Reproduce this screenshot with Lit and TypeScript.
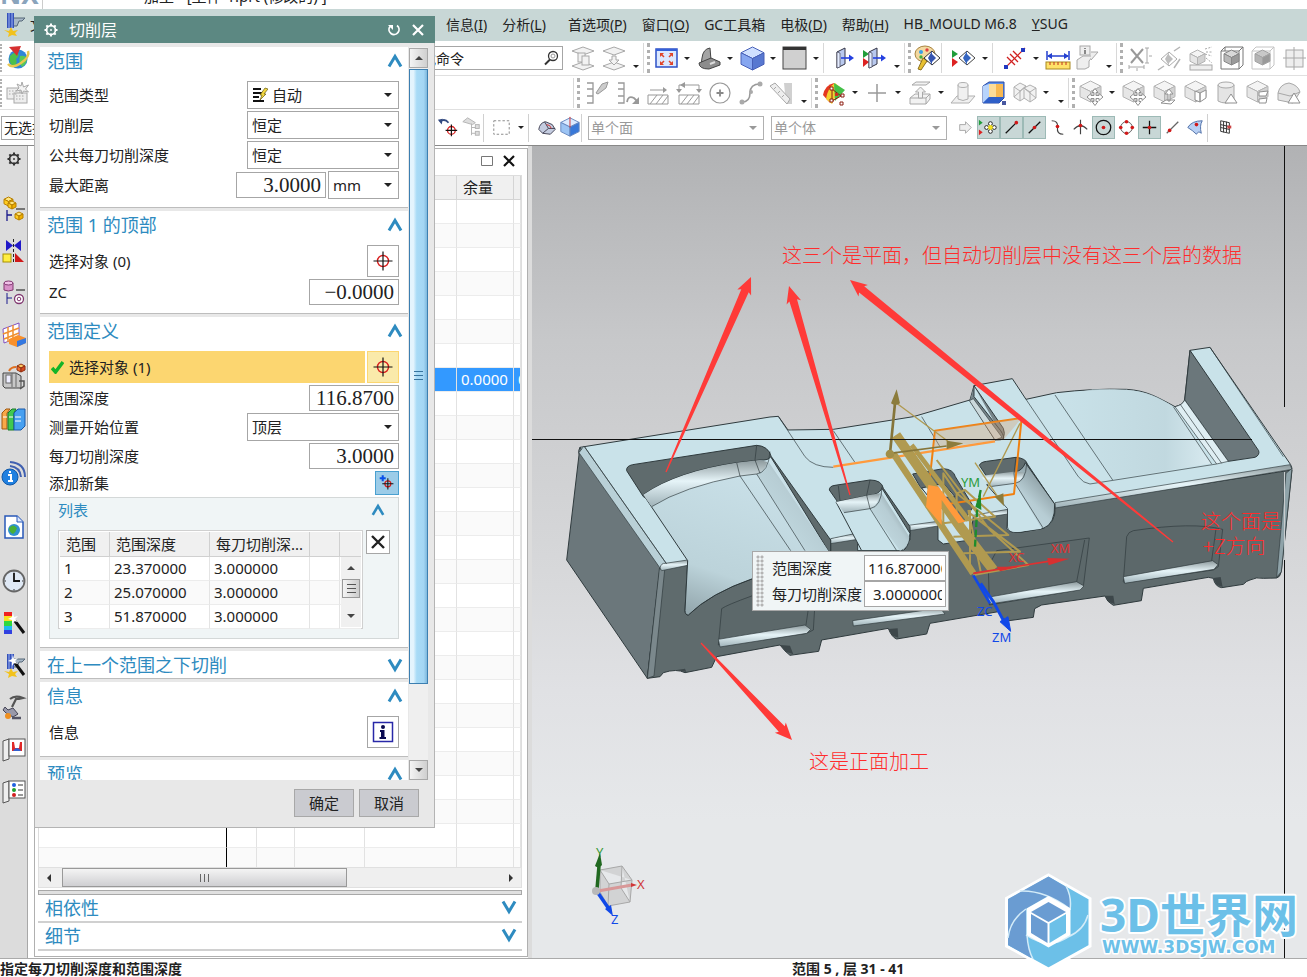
import { LitElement, html, svg, css, nothing } from "lit";
import { customElement, property } from "lit/decorators.js";
import { classMap } from "lit/directives/class-map.js";

/* ---------- icon drawing helpers ---------- */
const G = "#a8a8a8";

const cube = (x: number, y: number, s: number, top: string, left: string, right: string, line: string) => svg`
  <g stroke=${line} stroke-width="1" stroke-linejoin="round">
    <path fill=${top} d="M${x} ${y + s * 0.25}L${x + s * 0.5} ${y}L${x + s} ${y + s * 0.25}L${x + s * 0.5} ${y + s * 0.5}Z"/>
    <path fill=${left} d="M${x} ${y + s * 0.25}V${y + s * 0.75}L${x + s * 0.5} ${y + s}V${y + s * 0.5}Z"/>
    <path fill=${right} d="M${x + s} ${y + s * 0.25}V${y + s * 0.75}L${x + s * 0.5} ${y + s}V${y + s * 0.5}Z"/>
  </g>`;
const grayCube = (x: number, y: number, s: number) => cube(x, y, s, "#f4f4f4", "#e6e6e6", "#d2d2d2", "#b4b4b4");
const eye = (x: number, y: number, a: string, b: string) => svg`
  <path d="M${x - 8} ${y}L${x} ${y - 7}L${x + 8} ${y}L${x} ${y + 7}Z" fill="#fff" stroke=${a}/>
  <path d="M${x} ${y - 7}V${y + 7}L${x - 4} ${y}Z" fill=${b}/><path d="M${x} ${y - 4}L${x + 4} ${y}L${x} ${y + 4}Z" fill=${b}/>`;
const flags = svg`<path d="M2 6L8 10L2 14Z" fill="#1f9d3a"/><path d="M2 14L8 18L2 23Z" fill="#d22"/>`;
const door = (x: number) => svg`<path d="M${x} 8L${x + 8} 4V20L${x} 24Z" fill="#b9c9ee" stroke="#334"/><path d="M${x} 8l3 1v14l-3 1z" fill="#e4ecff" stroke="#334" stroke-width=".6"/>
  <path d="M${x + 4} 14H${x + 14}" stroke="#2440e0" stroke-width="1.6"/><path d="M${x + 12} 10.500l5 3.500l-5 3.500z" fill="#2440e0"/>`;
const move = svg`<path d="M17 11l3 4h-2v3h3v-2l4 3.500l-4 3.500v-2h-3v3h2l-3 4l-3-4h2v-3h-3v2l-4-3.500l4-3.500v2h3v-3h-2z" transform="translate(1 -1.500)" fill="#fff" stroke="#909090"/>`;
const target = (x: number, y: number, r: number, l: number) => svg`
  <circle cx=${x} cy=${y} r=${r} fill="none" stroke="#d81e1e" stroke-width="1.400"/>
  <path d="M${x - l} ${y}H${x + l}M${x} ${y - l}V${y + l}" stroke="#111" stroke-width="1.200"/>`;
const dot = (x: number, y: number) => svg`<circle cx=${x} cy=${y} r="1.900" fill="#d01818"/>`;
const gear = (c: string, bg: string) => svg`<circle cx="14" cy="14" r="4.800" fill="none" stroke=${c} stroke-width="1.800"/>
  <path d="M14 7v3M14 18v3M7 14h3M18 14h3M9 9l2 2M17 17l2 2M19 9l-2 2M11 17l-2 2" stroke=${c} stroke-width="2.200"/><circle cx="14" cy="14" r="3" fill=${bg}/><circle cx="14" cy="14" r="1" fill=${c}/>`;
const cutter = svg`<rect x="7" y="3" width="7" height="15" fill="#3450b8"/><path d="M9 3v15M12 3v15" stroke="#9db4f4"/><path d="M14 8h11l-3 3h-3l-2 5h-3" fill="#a8b8c8" stroke="#567"/><path d="M4 20l5 1l2-4l2 4l5-1l-3 3l2 3l-5-1l-4 2l1-4z" fill="#f2c21c"/>`;
const wand = svg`<path d="M15 12L24 24" stroke="#111" stroke-width="3"/><path d="M13 4l1 4l4-1l-3 3l3 3l-4-1l-2 3v-4l-4-1l4-2z" fill="#fff"/>`;

const icons: Record<string, unknown> = {
  gearDark: gear("#333", "#dcdcdc"),
  gearLight: gear("#fff", "#5c8882"),
  cutter,
  globe: svg`<circle cx="14" cy="15" r="9.500" fill="#2f86d8"/><path d="M6 12q4-5 8-3q2 3-2 6q2 4-2 8q-6-4-4-11z" fill="#4cc04c"/><path d="M16 12q5-1 7 2q0 6-5 9q-4-5-2-11z" fill="#58c858"/><path d="M4 20q4 5 13-1q9-6 7-12" fill="none" stroke="#e8c850" stroke-width="2.500"/><path d="M5 3l12-1l-4 10z" fill="#d63030"/>`,
  sheets: svg`<g fill="#eee" stroke=${G}><rect x="3" y="9" width="13" height="11"/><rect x="10" y="14" width="13" height="10"/></g><path d="M5 12h9M5 15h9M12 17h9M12 20h9" stroke=${G} stroke-dasharray="1.500 1.500"/><path d="M18 3l1.500 5l5-2l-3 4l3 3l-5-1l-1.500 3l-1-4l-5 1l3-3l-2-4l4 2z" fill="#f4f4f4" stroke=${G}/>`,
  layerA: svg`<g fill="#f2f2f2" stroke=${G}><path d="M3 7L14 3L25 7L14 11Z"/><path d="M3 22L14 18L25 22L14 26Z"/><rect x="9" y="9" width="7" height="9"/><rect x="13" y="12" width="7" height="9"/></g>`,
  layerB: svg`<g fill="#f2f2f2" stroke=${G}><path d="M3 7L14 3L25 7L14 11Z"/><path d="M3 22L14 18L25 22L14 26Z"/><path d="M12 12h4v4h3l-5 5l-5-5h3z"/></g>`,
  fit: svg`<rect x="4" y="5" width="21" height="18" fill="#dbe8ff" stroke="#2c50c8" stroke-width="1.500"/><path d="M4 5h21v2H4z" fill="#3560d8"/><path d="M8 9h4l-4 4zM21 9h-4l4 4zM8 21h4l-4-4zM21 21h-4l4-4z" fill="#e0442a"/><path d="M9 10l3 3M20 10l-3 3M9 20l3-3M20 20l-3-3" stroke="#e0442a" stroke-width="1.500"/>`,
  section: svg`<path d="M7 14Q8 5 15 4L16 16L6 21Z" fill="#a4a4a4" stroke="#444"/><path d="M4 19L16 14L25 18V21L14 25Q4 25 4 19Z" fill="#8c8c8c" stroke="#444"/><path d="M15 20l5-2" stroke="#ddd" stroke-width="2"/>`,
  blueCube: cube(3, 3, 23, "#cfe0ff", "#86a6f0", "#5878d0", "#4860b8"),
  grayBox: svg`<rect x="2" y="3" width="23" height="22" fill="#d0d0d0" stroke="#444"/><path d="M2 3h23v3H2z" fill="#333"/>`,
  doorOut: door(5),
  doorFlags: svg`${flags}${door(8)}`,
  palette: svg`<ellipse cx="12" cy="10" rx="10" ry="8" fill="#f3d9a0" stroke="#a88440"/><circle cx="8" cy="8" r="2" fill="#38a0e8"/><circle cx="14" cy="6" r="1.700" fill="#e04040"/><circle cx="8" cy="13" r="1.700" fill="#40b040"/><path d="M5 25l5-11l4 3l-6 9z" fill="#e8c030" stroke="#8c7020"/>${eye(19, 14, "#333", "#3555b0")}`,
  flagEye: svg`${flags}${eye(17, 14, "#444", "#3565c0")}`,
  measureLine: svg`<path d="M4 24L24 4" stroke="#d02020" stroke-width="1.200"/><path d="M6 13l8 8M9 10l8 8M12 7l8 8" stroke="#d02020" stroke-width="1.300"/><rect x="3" y="21" width="4" height="4" fill="#2238c0"/><rect x="20" y="4" width="4" height="4" fill="#2238c0"/>`,
  ruler: svg`<path d="M3 7v9M25 7v9M4 12h20" stroke="#2440d0" stroke-width="1.500"/><path d="M3 12l5-3v6zM25 12l-5-3v6z" fill="#2440d0"/><rect x="2" y="18" width="24" height="7" fill="#ffe268" stroke="#a88820"/><path d="M6 18v3M10 18v3M14 18v3M18 18v3M22 18v3" stroke="#c03020"/>`,
  infoGray: svg`<g stroke=${G} fill="#eee"><path d="M4 16l6-4h10l-4 5v6l-4 2H4z"/><rect x="7" y="2" width="10" height="9"/><path d="M18 8l7 0l-7 8"/></g><path d="M12 4v1M12 6v4" stroke="#888" stroke-width="2"/>`,
  xDim: svg`<path d="M6 5L18 19M18 5L6 19" stroke="#999" stroke-width="2"/><path d="M22 4v15M4 23h15" stroke=${G}/><path d="M20 4h4M20 19h4M4 21v4M19 21v4M24 12h3M12 24v3" stroke=${G}/>`,
  eyeGray: svg`<g opacity=".55">${eye(13, 15, "#666", "#888")}<path d="M2 26l6-4M24 3l-6 4M18 24l6-9" stroke="#777" stroke-width="1.500"/></g>`,
  rulerCube: svg`${grayCube(3, 6, 15)}<path d="M18 5l7-2M18 10l7 2M19 14l6 5M19 8h7" stroke=${G} stroke-dasharray="2 1.500"/><rect x="3" y="21" width="22" height="5" fill="#eee" stroke=${G}/>`,
  boxCube: svg`<path d="M3 7h18v18H3zM7 3h18v18M3 7l4-4M21 7l4-4M21 25l4-4M7 3v4" fill="none" stroke="#777"/>${cube(6, 6, 15, "#d8d8d8", "#b8b8b8", "#9a9a9a", "#888")}`,
  boxCube2: svg`<path d="M3 7h18v18H3zM7 3h18v18M3 7l4-4M21 7l4-4M21 25l4-4" fill="none" stroke="#c4c4c4"/>${cube(6, 6, 15, "#c8c8c8", "#b4b4b4", "#9a9a9a", "#a4a4a4")}`,
  boxCross: svg`<rect x="6" y="6" width="17" height="17" fill="#eee" stroke=${G}/><path d="M14 3v23M3 14h23" stroke=${G}/>`,
  pathLamp: svg`<path d="M5 4h6v6H5M5 10v0h6v7H5M11 17v7H5" fill="none" stroke="#999" stroke-width="1.300"/><path d="M14 14l6-9l6-2l-2 6l-8 6z" fill="#ccc" stroke="#999"/>`,
  pathTurn: svg`<path d="M5 4h6v6H5M5 10v0h6v7H5M11 17v7H5" fill="none" stroke="#999" stroke-width="1.300"/><path d="M14 23q1-7 7-4l3 3" fill="none" stroke="#999" stroke-width="1.800"/><path d="M26 18v7h-7z" fill="#999"/>`,
  hatch: svg`<path d="M4 16h20v9H4z" fill="#fff" stroke="#999"/><path d="M6 25l7-9M12 25l7-9M18 25l6-8" stroke="#999"/><path d="M6 11h15" stroke="#999"/><path d="M19 8l4 3l-4 3z" fill="#999"/>`,
  hatchBox: svg`<path d="M4 16h20v9H4z" fill="#fff" stroke="#999"/><path d="M6 25l7-9M12 25l7-9M18 25l6-8" stroke="#999"/><path d="M4 13V6h20v7" fill="none" stroke="#999"/><path d="M10 3l-5 3l5 3zM1 10h6l-3 4zM21 10h6l-3 4z" fill="#999"/>`,
  circlePlus: svg`<circle cx="14" cy="14" r="10" fill="none" stroke="#999" stroke-width="1.200"/><path d="M14 10.500v7M10.500 14h7" stroke="#888" stroke-width="1.800"/>`,
  curve: svg`<path d="M5 23q8 0 8-9t10-9" fill="none" stroke="#999" stroke-width="1.600"/><circle cx="5" cy="23" r="2.500" fill="#aaa"/><circle cx="23" cy="5" r="2.500" fill="#aaa"/><circle cx="14" cy="13" r="2" fill="#aaa"/>`,
  slope: svg`<path d="M16 4h8v21h-6z" fill="#d0d0d0"/><path d="M2 7l5-3l15 16l-3 5z" fill="#eee" stroke=${G}/><path d="M6 10l2-2M10 14l2-2M14 18l2-2" stroke=${G}/>`,
  rainbow: svg`<path d="M3 16Q5 6 14 4L10 24Z" fill="#e43820"/><path d="M6 20Q8 8 15 4L20 8L12 25Z" fill="#f4d030"/><path d="M14 4L25 11L15 22Z" fill="#44c048"/><path d="M12 10l9 7l-9 5M12 10v12" fill="none" stroke="#8c1c10"/><path d="M10 8h3v3h-3zM10 20h3v3h-3zM21 15h3v3h-3zM20 23h3v3h-3z" fill="#fff" stroke="#8c1c10"/><path d="M15 14h3v3h-3z" fill="#d03020"/>`,
  plus: svg`<path d="M14 5v18M5 14h18" stroke="#999" stroke-width="1.500"/>`,
  extrude: svg`<g fill="#f2f2f2" stroke=${G}><path d="M6 6h14l4-3h-14z"/><path d="M4 19l5-4h15v5l-4 5H4z"/><path d="M4 19h16l4-4M20 19v6" fill="none"/><path d="M12.500 19v-6h-3l5-5l5 5h-3v6z"/></g>`,
  cylSheet: svg`<g fill="#f0f0f0" stroke="#b0b0b0"><path d="M2 24l6-7h18l-6 7z"/><path d="M9 6v14q5 3 10 0V6"/><ellipse cx="14" cy="6" rx="5" ry="2.500"/></g>`,
  colorBox: svg`<path d="M3 7l6-4h15v16l-5 5H3z" fill="#5c90ec" stroke="#2848a0"/><path d="M9 5h14v13H9z" fill="#f8b850"/><path d="M9 5h7v13H9z" fill="#fcdc98"/><path d="M3 7l6-2v13l-6 6z" fill="#b8d4fc"/><path d="M3 24l6-6h15l-5 6z" fill="#2f5fc8"/><rect x="22" y="22" width="4" height="4" fill="#4858a0"/>`,
  wireCubes: svg`<g fill="#f2f2f2" stroke="#b0b0b0"><path d="M3 8l6-4l6 3v11l-6 4l-6-4z"/><path d="M13 9l6-3l6 3v10l-6 4l-6-4z"/><path d="M3 8l6 4v10M15 7l-6 5M13 9l6 4v10M25 9l-6 4M3 18l12-11M25 19l-12-10"/></g>`,
  cubeMove: svg`${grayCube(3, 2, 21)}${move}`,
  cubeUp: svg`${grayCube(3, 2, 21)}<path d="M10 24l5-3h9l-4 4zM17 22v-7h-3l4-5l4 5h-3v7z" fill="#fff" stroke="#909090"/>`,
  cubeFace: svg`${grayCube(3, 2, 21)}<path d="M13 12l5 2v9l-5-2zM18 14l6-3v8l-6 4z" fill="#fff" stroke="#909090"/>`,
  cylCone: svg`<path d="M5 6v16q7 4 16 0V6" fill="#e4e4e4" stroke=${G}/><ellipse cx="13" cy="6" rx="8" ry="3" fill="#f0f0f0" stroke=${G}/><path d="M18 15l6 9H12z" fill="#fff" stroke="#909090"/>`,
  cubeTear: svg`${grayCube(3, 2, 21)}<path d="M15 13l9-1l-2 5h-7zM15 20l8-1l-1 5h-7z" fill="#fff" stroke="#909090"/>`,
  roundCone: svg`<path d="M3 14q2-9 11-10q9 2 11 9l-7 11l-15-3z" fill="#e4e4e4" stroke=${G}/><path d="M3 14l12 3l10-4" fill="none" stroke=${G}/><path d="M19 14l6 10H13z" fill="#fff" stroke="#909090"/>`,
  snapUndo: svg`<path d="M5 8q5-4 9 1" fill="none" stroke="#334a80" stroke-width="1.800"/><path d="M3 6l5-1l-1 6z" fill="#334a80"/>${target(17, 17, 4, 6)}`,
  tools: svg`<g stroke="#b4b4b4" fill="#ddd"><path d="M5 8l5-4l8 5l-3 2z"/><path d="M14 10v12M14 14h5M14 20h5"/><rect x="18" y="11" width="4" height="4"/><rect x="18" y="18" width="4" height="4"/></g>`,
  marquee: svg`<rect x="6" y="7" width="16" height="14" fill="none" stroke="#888" stroke-dasharray="2.500 2"/>`,
  shell: svg`<path d="M6 16q1-7 7-8l7 3l3 5l-5 5l-8-1z" fill="#c4cce0" stroke="#445"/><path d="M12 8l4 7l-6 5M16 15l7 0" fill="none" stroke="#445"/><path d="M14 11q4 0 5 4" stroke="#d03030" fill="none"/>`,
  cubeBlue: svg`${cube(5, 4, 19, "#dbeaff", "#9cc4f4", "#3878d8", "#6888c0")}<path d="M14.500 3v11" stroke="#d03030"/>`,
  arrowGray: svg`<path d="M8 11h6V8l6 6l-6 6v-3H8z" fill="#eee" stroke="#aaa"/>`,
  snapAll: svg`<path d="M4 6l4 3l-4 3z" fill="#1f9d3a"/><path d="M4 16l4 3l-4 3z" fill="#d22"/><g fill="#fff" stroke="#222"><circle cx="12" cy="14" r="2"/><circle cx="20" cy="14" r="2"/><circle cx="16" cy="10" r="2"/><circle cx="16" cy="18" r="2"/></g><circle cx="16" cy="14" r="2.500" fill="#f4e020"/>`,
  snapEnd: svg`<path d="M8 20L19 9" stroke="#111" stroke-width="1.300"/>${dot(19, 9)}`,
  snapMid: svg`<path d="M8 20L20 8" stroke="#111" stroke-width="1.300"/>${dot(14, 14)}`,
  snapPole: svg`<path d="M8 7q7 0 6 7t6 7" fill="none" stroke="#444" stroke-width="1.200"/>${dot(14, 13)}`,
  snapCross: svg`<path d="M7 16q7-8 14 0M14 6v15" fill="none" stroke="#444" stroke-width="1.200"/>${dot(14, 12)}`,
  snapCenter: svg`<circle cx="14" cy="14" r="7.500" fill="none" stroke="#111" stroke-width="1.300"/>${dot(14, 14)}`,
  snapQuad: svg`<circle cx="14" cy="14" r="6" fill="none" stroke="#555"/>${dot(14, 8)}${dot(14, 20)}${dot(8, 14)}${dot(20, 14)}`,
  snapPoint: svg`<path d="M14 7v14M7 14h14" stroke="#111" stroke-width="1.300"/>${dot(14, 14)}`,
  snapCurve: svg`<path d="M8 20L20 8" stroke="#666" stroke-width="1.300"/>${dot(11, 17)}`,
  snapFace: svg`<path d="M6 14q4-7 15-7q-3 5-1 13q-3-3-5 1q-4-4-9-7z" fill="#b8d0f4" stroke="#5070a8"/>${dot(15, 11)}`,
  grid: svg`<g stroke="#333" fill="none"><path d="M9 7l9 2v11l-9-2zM9 11l9 2M9 14l9 2M12 8v11M15 8v11"/></g><path d="M16 12h4v3h-4z" fill="#c44"/>`,
  navTree: svg`${cube(4, 2, 9, "#ffe680", "#ffcc20", "#f0b000", "#b88000")}${cube(8, 6, 8, "#ffe680", "#ffcc20", "#f0b000", "#b88000")}<path d="M7 15v11M7 20h5" stroke="#1a1a8c" stroke-width="1.300" fill="none"/><path d="M16 14h9" stroke="#111"/>${cube(15, 17, 8, "#ffe680", "#ffcc20", "#f0b000", "#b88000")}`,
  constraint: svg`<path d="M6 3l7 5.500l-7 5.500zM21 3l-7 5.500l7 5.500z" fill="#2018c8"/><path d="M13.500 2v24" stroke="#222" stroke-dasharray="3 2"/><rect x="3" y="17" width="8" height="8" fill="#ffee40" stroke="#a89000"/><path d="M15 16v9h9z" fill="#d01818"/>`,
  reuse: svg`<path d="M4 4v7q4 2 9 0V4" fill="#d890c8" stroke="#803870"/><ellipse cx="8.500" cy="4" rx="4.500" ry="2" fill="#f0c0e8" stroke="#803870"/><path d="M7 14v11M7 19h5" stroke="#1a1a8c" fill="none"/><path d="M16 11h9" stroke="#111"/><circle cx="19" cy="20" r="4.500" fill="#fff" stroke="#803870" stroke-width="1.300"/><circle cx="19" cy="20" r="1.800" fill="none" stroke="#803870"/>`,
  meshBox: svg`<path d="M3 8L19 2v14L4 22z" fill="#fff" stroke="#8050c0"/><path d="M3 13l16-6M4 18l15-6M8 6v15M13 4v15" stroke="#f09030" stroke-width="1.500"/><path d="M9 18l9-4l8 3v5l-9 4l-8-3z" fill="#f8902c"/><path d="M17 20l9-3v5l-9 4z" fill="#3478e0"/>`,
  machine: svg`<path d="M3 10h13l5 3v12H5l-2-2z" fill="#c8c8c8" stroke="#444"/><rect x="6" y="12" width="5" height="8" fill="#eef" stroke="#666"/><path d="M12 10v14M16 10v14" stroke="#666"/><path d="M9 8q2-4 7-4" fill="none" stroke="#e07020" stroke-width="2"/>${cube(17, 1, 8, "#ffc860", "#f07030", "#d84820", "#903010")}<path d="M19 18h5v5l-4 3" fill="none" stroke="#555" stroke-width="1.500"/>`,
  books: svg`<path d="M2 8l4-4h4l-3 4v16H2z" fill="#f8a848" stroke="#a05810"/><path d="M8 8l4-4h4l-2 4v17H8z" fill="#40c850" stroke="#187828"/><path d="M14 8l4-4h7v17l-4 4h-7z" fill="#48a0f0" stroke="#1858a8"/><path d="M3 12h4M9 12h4M15 12h6M15 16h6" stroke="#fff"/>`,
  internet: svg`<circle cx="10" cy="18" r="8" fill="#2080e0" stroke="#1058a8"/><path d="M10 12v2M8 16h3v6M8 22h5" stroke="#fff" stroke-width="2" fill="none"/><path d="M10 7q10 1 11 11M10 3q15 1 15 15" fill="none" stroke="#4060b0" stroke-width="2"/>`,
  webDoc: svg`<path d="M5 3h12l6 6v16H5z" fill="#fff" stroke="#2858b8" stroke-width="1.500"/><path d="M17 3v6h6" fill="#dbe6ff" stroke="#2858b8"/><circle cx="14" cy="17" r="6" fill="#3090d0"/><path d="M9 15q4-5 8 0q-1 4-4 6q-4-2-4-6z" fill="#48b038"/>`,
  clock: svg`<circle cx="14" cy="14" r="10.500" fill="#dfe8f4" stroke="#666" stroke-width="1.800"/><path d="M14 6v8h6" stroke="#111" stroke-width="1.800" fill="none"/><path d="M14 4.500v1M14 22v1.500M4.500 14h1.500M22 14h1.500" stroke="#333"/>`,
  spectrum: svg`<rect x="4" y="3" width="8" height="4" fill="#f02020"/><rect x="4" y="7" width="8" height="5" fill="#f8e020"/><rect x="4" y="12" width="8" height="5" fill="#30d840"/><rect x="4" y="17" width="8" height="4" fill="#20b8f0"/><rect x="4" y="21" width="8" height="4" fill="#3040e0"/>${wand}`,
  cutWand: svg`${cutter}${wand}`,
  robot: svg`<path d="M10 6q5-4 13-1l-4 1l-3 0l-4 8" fill="none" stroke="#555" stroke-width="2.200"/><path d="M5 14l3 3l5-2l5 6l-5 3l-7-4l-3-3z" fill="#99a" stroke="#445"/><circle cx="8" cy="23" r="3" fill="#f09020"/><path d="M12 25h9" stroke="#556" stroke-width="2.500"/>`,
  bookRed: svg`<path d="M3 6l6-2v20l-6 2z" fill="#eee" stroke="#555"/><rect x="9" y="4" width="16" height="17" fill="#fff" stroke="#555"/><path d="M12 7h10v9H12z" fill="#e02828"/><path d="M14 7h6l-1 6h-4z" fill="#fff"/><path d="M13 16q4-6 8 0z" fill="#3060d0"/>`,
  bookList: svg`<path d="M3 6l6-2v20l-6 2z" fill="#eee" stroke="#555"/><rect x="9" y="4" width="16" height="17" fill="#fff" stroke="#555"/><circle cx="14" cy="8" r="2" fill="#2060e0"/><circle cx="14" cy="13" r="2" fill="#20a030"/><circle cx="14" cy="18" r="2" fill="#d02020"/><path d="M18 8h5M18 13h5M18 18h5" stroke="#333"/>`,
  target: target(14, 14, 5.5, 9.5),
  addTarget: svg`<path d="M9 5v7M5.500 8.500h7" stroke="#0a50e8" stroke-width="2.400"/>${target(15, 15, 3.5, 6.5)}`,
  infoBox: svg`<rect x="4.500" y="4.500" width="19" height="19" fill="#fff" stroke="#2828a8" stroke-width="1.500"/><circle cx="14" cy="9" r="2" fill="#0a0a50"/><path d="M11 12h4.500v7H17v2h-6.500v-2H12v-5h-1z" fill="#0a0a50"/>`,
  cross: svg`<path d="M7 7L21 21M21 7L7 21" stroke="#222" stroke-width="2.800"/>`,
};
const icon = (name: string, size = 28) =>
  html`<svg class="icon" width=${size} height=${size} viewBox="0 0 28 28" aria-hidden="true">${icons[name]}</svg>`;

const sheetIcon = html`<svg class="icon lead" width="16" height="16" viewBox="0 0 16 16" aria-hidden="true">
  <path d="M1 2h8M1 6h9M1 10h6M1 14h11" stroke="#111" stroke-width="2"/><path d="M13 1l3 1l-4 5h2l-6 6l2-5H8z" fill="#f4d840" stroke="#665c10" stroke-width=".7"/></svg>`;
const chevron = (down = false, size = 16) => html`<svg class="icon" width=${size} height=${size} viewBox="0 0 16 16" aria-hidden="true">
  <path d=${down ? "M2 2.500L8 12.500L14 2.500" : "M2 13.500L8 3.500L14 13.500"} fill="none" stroke="#2e8bc0" stroke-width="3"/></svg>`;

/* ---------- shared styles ---------- */
const base = css`
  * { box-sizing: border-box; }
  :host, button, input, select { font-family: "Noto Sans", "Noto Sans CJK SC", sans-serif; color: #222; }
  button { background: none; border: 0; padding: 0; margin: 0; font-size: inherit; line-height: inherit; }
  .icon { display: block; flex: none; }
  .pick { position: relative; display: flex; }
  .pick select { appearance: none; width: 100%; height: 100%; background: #fff; border: 1px solid #a6a6a6; border-radius: 0; padding: 0 18px 0 4px; font-size: 15px; margin: 0; }
  .pick::after { content: ""; position: absolute; right: 7px; top: 50%; margin-top: -2px; border: 4px solid transparent; border-top-color: #222; border-bottom: 0; pointer-events: none; }
`;

/* ---------- toolbars ---------- */
interface Group { wide?: boolean; cells: string }
@customElement("tool-strip")
class ToolStrip extends LitElement {
  @property({ attribute: false }) groups: Group[] = [];
  static styles = [base, css`
    :host { display: flex; align-items: center; }
    .group { display: flex; align-items: center; }
    .wide { gap: 2px; }
    button { width: 29px; height: 30px; display: flex; align-items: center; justify-content: center; }
    .caret { width: 14px; }
    .caret::after, .low::after { content: ""; border: 3px solid transparent; border-top-color: #222; border-bottom: 0; }
    .low { width: 15px; align-items: flex-end; padding-bottom: 5px; }
    .sep { width: 8px; height: 30px; border-left: 1px solid #d8d8d8; }
    .grip { width: 8px; height: 30px; border-left: 1px solid #d8d8d8; padding-left: 3px; }
    .grip::after { content: ""; display: block; height: 100%; border-left: 3px dotted #b0b0b0; }
  `];
  cell(c: string) {
    if (c === "v") return html`<button class="caret" aria-label="更多"></button>`;
    if (c === "_") return html`<button class="low" aria-label="选项"></button>`;
    if (c === "|") return html`<span class="sep"></span>`;
    if (c === ":") return html`<span class="grip"></span>`;
    return html`<button aria-label=${c}>${icon(c)}</button>`;
  }
  render() {
    return this.groups.map((g) => html`<div class=${classMap({ group: true, wide: !!g.wide })}>${g.cells.split(" ").map((c) => this.cell(c))}</div>`);
  }
}

/* ---------- 3D part scene ---------- */
const arrow = (x1: number, y1: number, x2: number, y2: number) => {
  const d = Math.hypot(x2 - x1, y2 - y1);
  const ux = (x2 - x1) / d, uy = (y2 - y1) / d;
  const p = (along: number, side: number) => `${(x1 + ux * along - uy * side).toFixed(1)},${(y1 + uy * along + ux * side).toFixed(1)}`;
  return svg`<polygon fill="#ff3a38" points=${[p(0, -0.6), p(d - 15, -4), p(d - 17, -7.5), p(d, 0), p(d - 17, 7.5), p(d - 15, 4), p(0, 0.6)].join(" ")}/>`;
};

@customElement("part-view")
class PartView extends LitElement {
  static styles = [base, css`
    :host { display: block; position: relative; flex: 1; min-width: 0; background: linear-gradient(#b1b2b4, #c7c8ca 24%, #d8d9db 54%, #e0e1e4 67%, #e6e8ea 83%); }
    .scene { display: block; width: 100%; height: 100%; }
    .note { font-family: "Noto Sans CJK SC", sans-serif; font-weight: 300; font-size: 20px; fill: #ff2c2c; }
    .axis { font-family: "Noto Sans", sans-serif; font-size: 13px; }
    .float { position: absolute; left: 220px; top: 405px; width: 197px; display: grid; grid-template-columns: 14px 90px 82px; column-gap: 2px; row-gap: 0; align-items: center; background: #f0f5f6; border: 1px solid #a8a8a8; padding: 3px 2px 3px 3px; font-size: 15px; line-height: 24px; }
    .handle { grid-row: 1 / 3; align-self: stretch; width: 8px; background: radial-gradient(circle, #b4b4b4 1px, transparent 2px) 0 0 / 4px 4px; }
    .float label { white-space: nowrap; }
    .float input { width: 82px; height: 26px; border: 1px solid #a6a6a6; border-radius: 0; padding: 0 3px; font-size: 15px; margin: 0; }
    .float .second { padding-left: 8px; }
  `];
  render() {
    return html`
      <svg class="scene" viewBox="532 146 775 812" preserveAspectRatio="xMinYMin slice">
        <defs>
          <linearGradient id="roll" x1="0" y1="0" x2="0" y2="1"><stop offset="0" stop-color="#8b989b"/><stop offset=".45" stop-color="#e6f4f8"/><stop offset="1" stop-color="#9fb2b8"/></linearGradient>
          <linearGradient id="roll2" x1="0" y1="1" x2="1" y2="0"><stop offset="0" stop-color="#c9e2e9"/><stop offset=".55" stop-color="#b7cdd4"/><stop offset="1" stop-color="#68767a"/></linearGradient>
          <linearGradient id="floor" x1=".6" y1="0" x2=".2" y2="1"><stop offset="0" stop-color="#cbe2ea"/><stop offset=".7" stop-color="#bcd3da"/><stop offset="1" stop-color="#8fa2a8"/></linearGradient>
          <linearGradient id="dish" x1="0" y1="0" x2="1" y2="0"><stop offset="0" stop-color="#c9e2e9"/><stop offset=".7" stop-color="#bdd4db"/><stop offset="1" stop-color="#dfeef3"/></linearGradient>
        </defs>
        <path d="M532 439.500H1252M1284.500 146V407" stroke="#111" fill="none"/>
        <path d="M1284.500 560V958" stroke="#111"/>
        <g transform="translate(560 340) scale(.33333)" stroke="#2f3a3d" stroke-width="3" stroke-linejoin="round">
          <path fill="#c9e2e9" d="M60 322L630 231L655 229L684 270L820 268L1060 230L1230 180L1242 137L1357 116L1398 178L1490 158Q1600 145 1700 148C1760 152 1790 170 1845 200Q1868 195 1874 180L1890 31L1950 22L2192 374L2196 385L1485 492L1480 560L1340 620L385 830L300 682Z"/>
          <path fill="#6b777b" d="M60 322Q54 330 57 345L20 660L262 1015L300 682Z"/>
          <path fill="#5f6b6d" d="M300 684L383 664L375 812Q376 826 385 825Q450 760 580 715L812 670V598L893 582V632H1030Q1050 620 1050 566L1134 549V600L1150 612L1230 600L1240 530L1343 512L1341 566Q1350 580 1380 577L1450 565Q1486 552 1486 500L2196 390L2164 695Q2160 712 2150 714L2110 715Q2090 710 2070 720Q2060 722 2050 733L1985 743Q1965 740 1960 715L1945 712L1750 745L1744 782L1660 796Q1640 785 1635 768L1445 795L1424 806L1420 832L1340 843Q1328 838 1315 815L1110 850L1100 882L1010 897Q995 892 985 865L785 900L776 934L690 946Q675 935 660 915L470 950L455 982L375 998Q350 985 310 998L300 1010L262 1015L300 684Z"/>
          <path fill="#7b888c" stroke-width="2" d="M298 686L262 1015L282 1008L314 690Z"/>
          <path fill="#b9d0d7" stroke-width="2" d="M72 318L320 672L300 684L57 338Z"/>
          <path fill="url(#roll)" stroke-width="2" d="M300 684Q304 668 316 670L383 660V676L305 692Z"/>
          <path fill="url(#roll)" stroke-width="2" d="M812 596L893 579V598L812 611Z"/>
          <path fill="url(#roll)" stroke-width="2" d="M1046 556L1134 544V558L1050 572Z"/>
          <path fill="url(#roll)" stroke-width="2" d="M1485 488L2190 374L2196 388L1486 504Z"/>
          <path fill="url(#roll)" stroke-width="2" d="M1240 526L1343 508V522L1242 538Z"/>
          <path fill="#8fa3a9" stroke-width="2" d="M2196 385L2164 695L2150 712L2178 400Z"/>

          <path fill="#5f6b6d" d="M200 392Q198 378 218 374L590 316Q625 318 634 350L812 600V634L560 640L250 470Z"/>
          <path fill="url(#floor)" d="M250 464Q350 395 530 368L600 360Q626 362 632 350L806 634L812 670L580 715Q450 760 385 825Q376 826 375 812L383 662Z"/>
          <path stroke="none" fill="url(#roll)" d="M250 464Q350 395 530 368L600 360L622 366Q612 398 590 402L540 408Q370 440 275 500Z"/>
          <path stroke="none" fill="url(#roll2)" d="M590 402Q618 396 626 366L806 634H740Z"/>
          <path fill="none" stroke-width="2" d="M275 500Q370 440 540 408L590 402Q625 398 630 335M530 368L540 408L692 632M590 402L735 632M590 316L585 360L600 400"/>
          <path fill="none" stroke-width="2" d="M655 229L735 350Q760 382 820 382M820 272L884 366M72 318L320 672"/>

          <path fill="#5f6b6d" d="M808 450Q808 438 825 436L930 420Q965 420 970 445L1050 560V600L1000 600L850 510Z"/>
          <path fill="#c9e2e9" d="M828 486L925 466Q955 466 966 445L1050 580Q1048 625 1020 632H905Z"/>
          <path stroke="none" fill="url(#roll)" d="M828 486L925 466L960 460Q955 502 930 506L852 518Z"/>
          <path stroke="none" fill="url(#roll2)" d="M930 506Q955 496 962 456L1048 590Q1046 622 1020 632Z"/>
          <path fill="none" stroke-width="2" d="M852 518L930 506Q965 500 966 440M835 438L840 482M930 420L920 466L930 506L1010 632"/>

          <path fill="#5f6b6d" d="M1058 402L1150 386Q1180 388 1186 410L1240 500L1200 560L1080 440Z"/>
          <path fill="url(#roll)" d="M1085 444L1150 430L1185 470L1110 476Z"/>
          <path fill="#5f6b6d" d="M1258 376Q1262 366 1280 364L1368 352Q1398 355 1402 372L1482 490L1440 520L1300 440Z"/>
          <path fill="url(#roll2)" d="M1280 434L1365 396Q1388 392 1396 368L1484 492Q1486 552 1450 565L1380 577Q1345 580 1343 560V506Z"/>
          <path stroke="none" fill="#c9e2e9" d="M1290 440L1365 430L1445 566L1380 575Q1345 580 1344 560V506Z"/>
          <path stroke="none" fill="url(#roll)" d="M1262 408L1370 394L1392 398Q1385 425 1365 430L1290 440Z"/>
          <path fill="none" stroke-width="2" d="M1290 440L1365 430Q1398 425 1400 370M1368 352L1362 400L1365 430L1450 565"/>

          <path fill="#768489" d="M1242 137V170L1322 272Q1334 290 1330 297Q1325 300 1305 300L1230 182M1242 137L1330 265Q1336 280 1330 295"/>
          <path fill="#cbd9dc" stroke-width="2" d="M1228 182L1240 176L1326 292L1305 300Z"/>
          <path fill="#6b777b" d="M1890 31L1874 180L2005 364L2085 352Q2100 345 2096 332Z"/>
          <path fill="url(#dish)" opacity=".7" stroke="none" d="M1600 148C1760 142 1790 170 1842 200L1955 370L1660 418L1490 168Z"/>
          <path fill="#dfeef3" stroke-width="2" d="M1845 200Q1868 195 1874 180L2005 364L1970 372Z"/>
          <path fill="none" stroke-width="2" d="M1398 178L1555 410Q1570 430 1590 432L1970 372M1485 165L1658 420M1840 200L1955 372M1862 195L1985 370M1085 230L1140 320M1950 22L2170 350"/>

          <path fill="#5c686a" stroke-width="2" d="M485 806Q500 795 575 768L768 740L760 870L740 880L475 915Z"/>
          <path fill="url(#roll)" stroke-width="2" d="M475 898L735 855L752 868L740 880L480 921Z"/>
          <path fill="url(#roll)" stroke-width="2" d="M878 842L1140 804L1155 822L880 858Z"/>
          <path fill="#5c686a" stroke-width="2" d="M1285 680L1310 632L1588 594L1570 740L1555 750L1288 795Z"/>
          <path fill="url(#roll)" stroke-width="2" d="M1283 772L1550 725L1572 738L1560 750L1290 792Z"/>
          <path fill="none" stroke-width="2" d="M1574 600L1550 725M746 800L738 855"/>
          <path fill="#5c686a" stroke-width="2" d="M1690 725L1700 590Q1705 575 1720 572Q1900 545 1988 568L1975 680L1960 690L1692 728Z"/>
          <path fill="url(#roll)" stroke-width="2" d="M1690 710L1958 662L1974 674L1962 688L1694 730Z"/>
          <path fill="none" stroke-width="2" d="M1968 566L1955 662"/>
          <path fill="#3d474a" stroke="none" d="M660 915l30 2l10 26l-22-8zM985 867l28 -2l2 28l-18-6zM1635 767l25 0l4 26l-18-8zM1960 714l22 -3l6 30l-18-6zM350 990l25-4l4 10z"/>

          <path d="M820 380L1305 304" stroke="#ff9a3c" stroke-width="7" fill="none"/>
          <path d="M1125 272L1385 234L1362 462L1100 502Z" fill="none" stroke="#f08010" stroke-width="6"/>
          <path d="M1125 272L1385 234L1330 300L1120 325Z" fill="#d8a070" fill-opacity=".35" stroke="none"/>
          <g stroke="#b09a50" fill="none" stroke-width="9">
            <path d="M1000 340L1240 700" stroke-width="20"/><path d="M1008 285L1200 560L1300 690" stroke-width="30"/><path d="M1055 315L1225 540" stroke-width="14"/>
            <path d="M1240 705L1405 675L1290 570L1130 360M1210 640L1380 635L1230 520M1180 590L1345 585L1190 460L1150 400V560M1150 550L1305 530L1215 450L1190 460V550M1230 700V510M1262 695L1225 510" stroke-width="6"/>
            <path d="M1010 190L1175 312M1245 368L1320 480M1380 250L1270 470" stroke-width="4"/>
          </g>
          <path d="M1105 435L1135 440L1215 545L1195 550L1145 480V555L1098 500Z" fill="#ff9a3c" stroke="none"/>
          <path d="M990 340L1005 190" stroke="#85753a" stroke-width="8"/><path d="M990 340L1160 318" stroke="#85753a" stroke-width="5"/>
          <path d="M1010 148L993 190Q1006 200 1020 190ZM1210 310L1160 302V328ZM1332 498L1304 470L1330 460Z" fill="#8c7c3c" stroke="none"/>
          <circle cx="990" cy="342" r="13" fill="#a08e48" stroke="none"/>
          <path d="M1262 450L1252 500L1245 620" stroke="#1e8c2c" stroke-width="7" stroke-dasharray="22 8" fill="none"/><path d="M1262 450L1246 500L1264 510Z" fill="#1e8c2c" stroke="none"/>
          <path d="M1240 700L1465 664" stroke="#e03030" stroke-width="5"/><path d="M1528 656L1462 654L1466 676ZM1380 680L1310 680L1320 694Z" fill="#d83030" stroke="none"/>
          <path d="M1240 706L1290 790" stroke="#1048e8" stroke-width="8"/><path d="M1262 730L1300 785L1332 845" stroke="#1048e8" stroke-width="9" fill="none"/><path d="M1352 874L1320 845L1344 830Z" fill="#1048e8" stroke="#1048e8"/>
        </g>
        <path d="M1284.500 472V560" stroke="#c8ccce"/>
        <path d="M532 439.500H1252" stroke="#111" stroke-width="1"/>
        <g class="axis">
          <text x="961" y="487" fill="#2c9c3c">YM</text><text x="1051" y="553" fill="#e03030">XM</text><text x="1009" y="562" fill="#e03030">XC</text>
          <text x="977" y="616" fill="#1048e8">ZC</text><text x="992" y="642" fill="#1048e8">ZM</text>
          <text x="596" y="857" fill="#3a9a3a">Y</text><text x="637" y="889" fill="#d03838">X</text><text x="611" y="924" fill="#1048e8">Z</text>
        </g>
        <path d="M600 870L622 866L632 880L630 902L608 906L600 892ZM600 870L609 884L632 880M609 884L608 906M622 866L621 888L630 902" fill="#c4c4c4" fill-opacity=".6" stroke="#a8a8a8"/>
        <path d="M598 891L632 885" stroke="#d89898" stroke-width="3"/><path d="M637 885l-6-2v4z" fill="#d03838"/>
        <path d="M597 889L599 866" stroke="#206820" stroke-width="3.500"/><path d="M600 853L595 866Q599 869 602 865Z" fill="#206820"/>
        <path d="M598 893L609 909" stroke="#1048e8" stroke-width="3.500"/><path d="M613 916L605 909L611 905Z" fill="#1048e8"/>
        <circle cx="596" cy="891" r="4" fill="#b8b8b8"/>
        ${arrow(666, 472, 751, 277)}${arrow(850, 495, 789, 286)}${arrow(1173, 542, 850, 280)}${arrow(701, 643, 792, 740)}
        <g class="note">
          <text x="782" y="263">这三个是平面，但自动切削层中没有这三个层的数据</text>
          <text x="1201" y="529">这个面是</text><text x="1203" y="554">+Z方向</text>
          <text x="809" y="769">这是正面加工</text>
        </g>
      </svg>
      <form class="float">
        <span class="handle"></span>
        <label for="fd">范围深度</label><input id="fd" value="116.870000">
        <label for="fc">每刀切削深度</label><input id="fc" class="second" value="3.0000000">
      </form>`;
  }
}

/* ---------- cut levels dialog ---------- */
@customElement("cut-dialog")
class CutDialog extends LitElement {
  static styles = [base, css`
    :host { display: flex; flex-direction: column; background: #e8e8e8; border: 1px solid #b4b4b4; border-top: 0; font-size: 15px; line-height: 24px; }
    .title { display: flex; align-items: center; height: 27px; flex: none; background: #5c8882; color: #fff; margin: 0 -1px; padding: 0 5px 0 4px; }
    .title h2 { flex: 1; margin: 0 0 0 5px; font-size: 16px; font-weight: 400; }
    .title button { width: 24px; display: flex; justify-content: center; }
    .main { flex: 1; min-height: 0; display: flex; padding: 4px 6px 0 5px; gap: 1px; }
    .list { flex: 1; min-width: 0; overflow: hidden; }
    section { background: #fff; border-bottom: 1px solid #bdbdbd; margin-bottom: 3px; padding-bottom: 8px; }
    section.closed { padding-bottom: 0; }
    .head { width: 100%; height: 34px; display: flex; align-items: flex-start; justify-content: space-between; padding: 1px 5px 0 7px; font-size: 18px; line-height: 27px; color: #2e8bc0; }
    .closed .head { height: 27px; }
    .head .icon { margin-top: 5px; }
    .rows { display: flex; flex-direction: column; gap: 2px; padding: 0 9px; }
    .row { display: flex; align-items: center; justify-content: space-between; gap: 2px; }
    .row label, .row .name { flex: 1; }
    .pick { width: 152px; height: 28px; }
    .unit { width: 71px; }
    .lead { position: absolute; left: 5px; top: 6px; }
    .withicon select { padding-left: 24px; }
    .num { width: 90px; height: 26px; border: 1px solid #a6a6a6; border-radius: 0; text-align: right; font-family: "Liberation Serif", serif; font-size: 21px; padding: 0 4px; margin: 0; background: #fff; }
    .sq { width: 32px; height: 32px; border: 1px solid #a6a6a6; background: #fff; display: flex; align-items: center; justify-content: center; }
    .small { width: 24px; height: 24px; }
    .active { height: 32px; }
    .active .name { background: #fcd670; height: 32px; display: flex; align-items: center; gap: 5px; padding-left: 2px; }
    .active .sq { background: #faeaaa; border-color: #fcd670; }
    .add { background: #9ccce8; border-color: #4aa0d0; }
    .box { height: 142px; background: #f0f5f6; border: 1px solid #d4d8d8; padding: 0 8px; }
    .sub { width: 100%; display: flex; justify-content: space-between; align-items: center; height: 25px; color: #2e8bc0; padding: 0 5px 2px 0; }
    .area { display: flex; align-items: flex-start; gap: 3px; margin-top: 7px; }
    .tbl { position: relative; width: 305px; height: 99px; border: 1px solid #d0d0d0; background: #fff; padding: 1px; }
    table { border-collapse: separate; border-spacing: 0; table-layout: fixed; width: 301px; }
    th, td { height: 24px; padding: 0 0 0 4px; text-align: left; font-weight: 400; border-right: 1px solid #e4e4e4; border-bottom: 1px solid #ececec; line-height: 23px; white-space: nowrap; overflow: hidden; }
    th { background: #f0f0f0; height: 25px; padding-left: 6px; border-color: #d0d0d0; }
    th:last-child, td:last-child { border-right: 0; }
    tr:nth-child(even) td { background: #fafafa; }
    .mini { position: absolute; right: 1px; top: 26px; bottom: 1px; width: 20px; background: #f0f0f0; display: flex; flex-direction: column; align-items: center; }
    .mini .thumb { width: 18px; height: 19px; border: 1px solid #999; background: repeating-linear-gradient(#555 0 1px, transparent 1px 4px) 4px 4px / 9px 10px no-repeat, linear-gradient(90deg, #f4f4f4, #ccc); }
    .up, .down { height: 22px; display: flex; align-items: center; }
    .mini .down { margin-top: auto; }
    .up::after { content: ""; border: 4px solid transparent; border-bottom-color: #444; border-top: 0; }
    .down::after { content: ""; border: 4px solid transparent; border-top-color: #444; border-bottom: 0; }
    .bar { width: 19px; display: flex; flex-direction: column; background: #efefef; padding-top: 1px; }
    .bar button { height: 20px; justify-content: center; border: 1px solid #a8a8a8; background: linear-gradient(90deg, #f4f4f4, #cfcfcf); }
    .bar .thumb { flex: 0 0 618px; flex-basis: 84%; margin-top: 1px; border: 1px solid #3c7fb1; background: repeating-linear-gradient(#37749e 0 1px, transparent 1px 4px) center / 9px 10px no-repeat, linear-gradient(90deg, #e4f4fd 0 20%, #a8dbf6 40%, #a4d6f4 80%, #7fb8dc); }
    .bar .down { margin-top: auto; }
    .foot { height: 47px; flex: none; display: flex; justify-content: flex-end; gap: 5px; padding: 9px 15px 0 0; }
    .foot button { width: 60px; height: 28px; background: #cacbd0; border: 1px solid #a8a8a8; }
  `];
  head(t: string, down = false) {
    return html`<button class="head"><span>${t}</span>${chevron(down)}</button>`;
  }
  select(id: string, label: string, value: string, lead: unknown = nothing) {
    return html`<div class="row"><label for=${id}>${label}</label>
      <span class=${classMap({ pick: true, withicon: lead !== nothing })}>${lead === nothing ? nothing : html`<select id=${id}><option>${value}</option></select>${lead}`}${lead === nothing ? html`<select id=${id}><option>${value}</option></select>` : nothing}</span></div>`;
  }
  num(id: string, label: string, value: string) {
    return html`<div class="row"><label for=${id}>${label}</label><input class="num" id=${id} value=${value}></div>`;
  }
  render() {
    const data = [["1", "23.370000", "3.000000"], ["2", "25.070000", "3.000000"], ["3", "51.870000", "3.000000"]];
    return html`
      <div class="title">${icon("gearLight", 26)}<h2>切削层</h2>
        <button aria-label="重置"><svg class="icon" width="16" height="16" viewBox="0 0 16 16"><path d="M11 3.500A5 5 0 1 1 4 4.500" fill="none" stroke="#fff" stroke-width="1.800"/><path d="M2 3h5v5z" fill="#fff"/></svg></button>
        <button aria-label="关闭"><svg class="icon" width="16" height="16" viewBox="0 0 16 16"><path d="M3 3L13 13M13 3L3 13" stroke="#fff" stroke-width="2.200"/></svg></button></div>
      <div class="main">
        <div class="list">
          <section>${this.head("范围")}<div class="rows">
            ${this.select("type", "范围类型", "自动", sheetIcon)}${this.select("level", "切削层", "恒定")}${this.select("common", "公共每刀切削深度", "恒定")}
            <div class="row"><label for="max">最大距离</label><input class="num" id="max" value="3.0000"><span class="pick unit"><select aria-label="单位"><option>mm</option></select></span></div>
          </div></section>
          <section>${this.head("范围 1 的顶部")}<div class="rows">
            <div class="row"><span class="name">选择对象 (0)</span><button class="sq" aria-label="选择对象">${icon("target")}</button></div>
            ${this.num("zc", "ZC", "−0.0000")}
          </div></section>
          <section>${this.head("范围定义")}<div class="rows">
            <div class="row active"><span class="name"><svg class="icon" width="13" height="14" viewBox="0 0 13 14"><path d="M1 8L4.500 12L12 2" fill="none" stroke="#14b428" stroke-width="3.500"/></svg>选择对象 (1)</span><button class="sq" aria-label="选择对象">${icon("target")}</button></div>
            ${this.num("depth", "范围深度", "116.8700")}${this.select("from", "测量开始位置", "顶层")}${this.num("per", "每刀切削深度", "3.0000")}
            <div class="row"><span class="name">添加新集</span><button class="sq small add" aria-label="添加新集">${icon("addTarget", 24)}</button></div>
            <div class="box"><button class="sub"><span>列表</span>${chevron(false, 14)}</button>
              <div class="area"><div class="tbl">
                <table><colgroup><col style="width:50px"><col style="width:100px"><col style="width:100px"><col style="width:30px"><col></colgroup>
                  <thead><tr><th>范围</th><th>范围深度</th><th>每刀切削深...</th><th></th><th></th></tr></thead>
                  <tbody>${data.map((r) => html`<tr>${r.map((c) => html`<td>${c}</td>`)}<td></td><td></td></tr>`)}</tbody></table>
                <div class="mini"><span class="up"></span><span class="thumb"></span><span class="down"></span></div>
              </div><button class="sq small" aria-label="移除">${icon("cross", 24)}</button></div></div>
          </div></section>
          <section class="closed">${this.head("在上一个范围之下切削", true)}</section>
          <section>${this.head("信息")}<div class="rows"><div class="row"><span class="name">信息</span><button class="sq" aria-label="信息">${icon("infoBox")}</button></div></div></section>
          <section>${this.head("预览")}</section>
        </div>
        <div class="bar"><button class="up" aria-label="向上"></button><div class="thumb"></div><button class="down" aria-label="向下"></button></div>
      </div>
      <div class="foot"><button>确定</button><button>取消</button></div>`;
  }
}

/* ---------- operation navigator ---------- */
@customElement("op-navigator")
class OpNavigator extends LitElement {
  static styles = [base, css`
    :host { display: flex; background: #fff; width: 504px; flex: none; padding: 2px 0 1px 6px; border-right: 4px solid #dcdcdc; font-size: 15px; }
    .panel { flex: 1; min-width: 0; display: flex; flex-direction: column; border: 1px solid #b0b0b0; padding: 0 5px 5px 3px; }
    .bar { height: 26px; flex: none; display: flex; justify-content: flex-end; align-items: center; gap: 8px; padding: 0 6px 2px; }
    .grid { flex: 1; min-height: 0; overflow: hidden; border: 1px solid #ddd; border-bottom: 0; }
    table { width: 100%; table-layout: fixed; border-collapse: separate; border-spacing: 0; }
    td, th { height: 24px; border-right: 1px solid #e2e2e2; border-bottom: 1px solid #ececec; padding: 0 0 0 6px; font-weight: 400; text-align: left; line-height: 23px; overflow: hidden; white-space: nowrap; }
    td:nth-child(1) { border-right-color: #000; }
    th { background: #f0f0f0; border-color: #d4d4d4; }
    tbody tr:nth-child(even) td { background: #fafafa; }
    tbody tr.sel td { background: #3399ff; color: #fff; padding-left: 4px; }
    .scroll { display: flex; align-items: center; height: 21px; flex: none; background: #efefef; border: 1px solid #e0e0e0; padding: 0 8px; }
    .l, .r { border: 4px solid transparent; }
    .l { border-right-color: #333; border-left: 0; } .r { border-left-color: #333; border-right: 0; margin-left: auto; }
    .thumb { width: 285px; height: 19px; margin-left: 11px; border: 1px solid #999; background: repeating-linear-gradient(90deg, #666 0 1px, transparent 1px 4px) center / 10px 8px no-repeat, linear-gradient(#f4f4f4, #cfcfd2); }
    .split { height: 5px; flex: none; margin-top: 2px; background: #e0e0e0; border: 1px solid #a8a8a8; }
    .fold { height: 28px; flex: none; display: flex; align-items: center; justify-content: space-between; padding: 0 5px 0 7px; font-size: 18px; line-height: 24px; color: #2e8bc0; border-bottom: 2px solid #d0d0d0; }
    .fold .icon { margin-bottom: 3px; }
  `];
  render() {
    const rows = Array.from({ length: 28 }, (_, i) => i);
    return html`<div class="panel">
      <div class="bar">
        <button aria-label="还原"><svg class="icon" width="14" height="14" viewBox="0 0 14 14"><path d="M1.500 2.500h11v9h-11z" fill="none" stroke="#777"/></svg></button>
        <button aria-label="关闭"><svg class="icon" width="14" height="14" viewBox="0 0 14 14"><path d="M2 2L12 12M12 2L2 12" stroke="#111" stroke-width="2.200"/></svg></button></div>
      <div class="grid"><table>
        <colgroup><col style="width:188px"><col style="width:30px"><col style="width:38px"><col style="width:70px"><col style="width:92px"><col style="width:57px"><col></colgroup>
        <thead><tr><th></th><th></th><th></th><th></th><th></th><th>余量</th><th></th></tr></thead>
        <tbody>${rows.map((i) => html`<tr class=${classMap({ sel: i === 7 })}><td></td><td></td><td></td><td></td><td></td><td>${i === 7 ? "0.0000" : nothing}</td><td>${i === 7 ? "0" : nothing}</td></tr>`)}</tbody>
      </table></div>
      <div class="scroll"><span class="l"></span><span class="thumb"></span><span class="r"></span></div>
      <div class="split"></div>
      <button class="fold"><span>相依性</span>${chevron(true)}</button>
      <button class="fold"><span>细节</span>${chevron(true)}</button>
    </div>`;
  }
}

/* ---------- application shell ---------- */
const viewTools: Group[] = [
  { wide: true, cells: "layerA layerB" },
  { cells: "_ : fit v section v blueCube v grayBox v | doorOut doorFlags _ : palette | flagEye v | measureLine v ruler infoGray _ :" },
  { wide: true, cells: "xDim eyeGray rulerCube boxCube boxCube2 boxCross" },
];
const pathTools: Group[] = [
  { cells: ":" },
  { wide: true, cells: "pathLamp pathTurn hatch hatchBox circlePlus curve slope" },
  { cells: "_ : rainbow v plus v extrude v" },
  { wide: true, cells: "cylSheet colorBox wireCubes" },
  { cells: "v _ : cubeMove v" },
  { wide: true, cells: "cubeMove cubeUp cubeFace cylCone cubeTear roundCone" },
];

@customElement("app-root")
class AppRoot extends LitElement {
  static styles = [base, css`
    :host { display: flex; flex-direction: column; position: relative; height: 100vh; overflow: hidden; background: #fff; font-size: 14px; }
    .caption { height: 9px; flex: none; overflow: hidden; display: flex; align-items: flex-end; font-size: 15px; line-height: 26px; }
    .brand { width: 43px; margin-right: 101px; border-right: 1px solid #ccc; font-weight: 700; font-size: 26px; line-height: 30px; color: #8aa4bc; }
    nav { height: 32px; flex: none; background: #c8d7d6; display: flex; align-items: center; gap: 15px; padding-bottom: 3px; }
    nav .first { width: 431px; display: flex; align-items: center; gap: 2px; }
    nav a { color: #222; text-decoration: none; white-space: nowrap; }
    .after { margin-left: 7px; }
    .bar { display: flex; align-items: center; height: 35px; flex: none; border-bottom: 1px solid #e0e0e0; overflow: hidden; }
    .bar.short { height: 34px; }
    .bar.third { height: 36px; border-bottom: 1px solid #888; }
    .left { flex: none; padding-left: 2px; border-left: 2px dotted #b0b0b0; }
    .left.a { width: 400px; } .left.b { width: 573px; }
    .search { position: relative; width: 163px; margin-right: 5px; flex: none; }
    .search input { width: 100%; height: 24px; border: 1px solid #a6a6a6; border-radius: 0; padding: 0 7px; font-size: 14px; margin: 0; display: block; }
    .search svg { position: absolute; right: 4px; top: 4px; }
    .filter { width: 200px; height: 24px; margin: 0 236px 0 1px; flex: none; }
    .third .pick select { font-size: 14px; padding-left: 2px; }
    .kind { width: 176px; height: 24px; margin-right: 7px; flex: none; }
    .kind select:disabled { color: #999; opacity: 1; border-color: #b0b0b0; }
    .kind::after { border-top-color: #999; }
    .t { width: 23px; height: 23px; display: flex; align-items: center; justify-content: center; flex: none; overflow: hidden; }
    .t .icon { margin: -2px; }
    .on { background: #c8d7d6; border: 1px solid #9dbab6; }
    .sep { width: 7px; height: 28px; border-left: 1px solid #d0d0d0; flex: none; }
    .caret { width: 15px; display: flex; justify-content: center; }
    .caret::after { content: ""; border: 3px solid transparent; border-top-color: #222; border-bottom: 0; }
    .work { flex: 1; min-height: 0; display: flex; }
    .side { width: 28px; flex: none; background: #dcdcdc; border-right: 1px solid #a8a8a8; display: flex; flex-direction: column; align-items: center; }
    .side button { height: 42px; display: flex; align-items: center; }
    .side .cog { height: 26px; margin-bottom: 16px; }
    .side .gap { margin-top: 12px; }
    cut-dialog { position: absolute; left: 34px; top: 16px; bottom: 149px; width: 401px; z-index: 2; }
    footer { height: 19px; flex: none; background: #fff; border-top: 1px solid #aaa; display: grid; grid-template-columns: 792px 1fr; font-weight: 700; line-height: 19px; }
    .mark { position: absolute; right: 4px; bottom: 4px; z-index: 3; overflow: visible; }
    .mark text { fill: #6cc0e8; stroke: #fff; stroke-width: 4px; paint-order: stroke; stroke-linejoin: round; font-family: "Noto Sans", "Noto Sans CJK SC", sans-serif; font-weight: 700; }
    .big { font-size: 46px; }
    .mark .url { font-family: "DejaVu Sans", sans-serif; font-size: 17px; stroke-width: 3px; }
  `];
  link(t: string, k = "", cls = "") {
    return html`<a href="#" class=${cls}>${t}${k ? html`(<u>${k}</u>)` : nothing}</a>`;
  }
  tool(name: string, on = false) {
    return html`<button class=${classMap({ t: true, on })} aria-label=${name}>${icon(name, 27)}</button>`;
  }
  render() {
    const side = ["navTree", "constraint", "reuse", "meshBox", "machine", "books", "internet", "webDoc", "clock", "spectrum", "cutWand", "robot", "bookRed", "bookList"];
    const gaps = ["internet", "webDoc", "clock"];
    return html`
      <div class="caption"><span class="brand">NX</span><span>加工 - [工件-1.prt (修改的) ]</span></div>
      <nav><span class="first">${icon("cutter")}<a href="#">文件(<u>F</u>)</a></span>
        ${this.link("信息", "I")}${this.link("分析", "L")}${this.link("首选项", "P", "after")}${this.link("窗口", "O")}${this.link("GC工具箱")}${this.link("电极", "D")}${this.link("帮助", "H")}${this.link("HB_MOULD M6.8")}<a href="#"><u>Y</u>SUG</a></nav>
      <div class="bar"><div class="left a">${icon("globe")}</div>
        <div class="search"><input aria-label="查找命令" value="查找命令"><svg width="16" height="16" viewBox="0 0 16 16"><circle cx="10" cy="6" r="4.500" fill="#fff" stroke="#333" stroke-width="1.300"/><circle cx="10" cy="6" r="2" fill="none" stroke="#999"/><path d="M7 9.500L2 14.500" stroke="#333" stroke-width="2"/></svg></div>
        <tool-strip .groups=${viewTools}></tool-strip></div>
      <div class="bar short"><div class="left b">${icon("sheets")}</div>
        <tool-strip .groups=${pathTools}></tool-strip></div>
      <div class="bar third"><span class="pick filter"><select aria-label="过滤器"><option>无选择过滤器</option></select></span>
        ${this.tool("snapUndo")}${this.tool("tools")}<span class="sep"></span>${this.tool("marquee")}<button class="caret" aria-label="更多"></button><span class="sep"></span>
        ${this.tool("shell")}${this.tool("cubeBlue")}<span class="sep"></span>
        <span class="pick kind"><select disabled aria-label="面规则"><option>单个面</option></select></span><span class="pick kind"><select disabled aria-label="体规则"><option>单个体</option></select></span>
        ${this.tool("arrowGray")}${this.tool("snapAll", true)}${this.tool("snapEnd", true)}${this.tool("snapMid", true)}${this.tool("snapPole")}${this.tool("snapCross")}${this.tool("snapCenter", true)}${this.tool("snapQuad")}${this.tool("snapPoint", true)}${this.tool("snapCurve")}${this.tool("snapFace")}<span class="sep"></span>${this.tool("grid")}</div>
      <div class="work">
        <div class="side"><button class="cog" aria-label="设置">${icon("gearDark", 26)}</button>
          ${side.map((s) => html`<button class=${classMap({ gap: gaps.includes(s) })} aria-label=${s}>${icon(s, 28)}</button>`)}</div>
        <op-navigator></op-navigator>
        <part-view></part-view>
      </div>
      <footer><span>指定每刀切削深度和范围深度</span><span>范围 5 , 层 31 - 41</span></footer>
      <cut-dialog></cut-dialog>
      <svg class="mark" width="300" height="100" viewBox="1003 873 300 100">
        <path d="M1048.500 875L1090 898.500V946L1048.500 969L1006.500 946V898.500Z" fill="#6cc0e8" stroke="#fff" stroke-width="3"/>
        <path d="M1048.500 876.500L1066 887Q1071 897 1070 909L1048 896L1026 909V935Q1030 950 1031 958L1008 945V899Z" fill="#6a9cd2"/>
        <path d="M1020 891Q1045 890 1070 909M1026 909Q1010 920 1008 938M1027 935Q1028 950 1033 959M1026 935Q1048 950 1068 937Q1084 930 1088 915M1066 886Q1072 897 1070 910" fill="none" stroke="#d4ecf8" stroke-width="1.500"/>
        <path d="M1048.500 896L1070.500 908.500V935L1048.500 947.500L1026.500 935V908.500Z" fill="#fff"/>
        <path d="M1048.500 902L1066 912L1048.500 922L1031 912Z" fill="#6a9cd2"/><path d="M1031 914L1047.500 923.500V943L1031 933Z" fill="#6a9cd2"/><path d="M1066 914L1049.500 923.500V943L1066 933Z" fill="#6cc0e8"/>
        <text class="big" x="1100" y="932">3D世界网</text><text class="url" x="1102" y="953">WWW.3DSJW.COM</text>
      </svg>`;
  }
}
